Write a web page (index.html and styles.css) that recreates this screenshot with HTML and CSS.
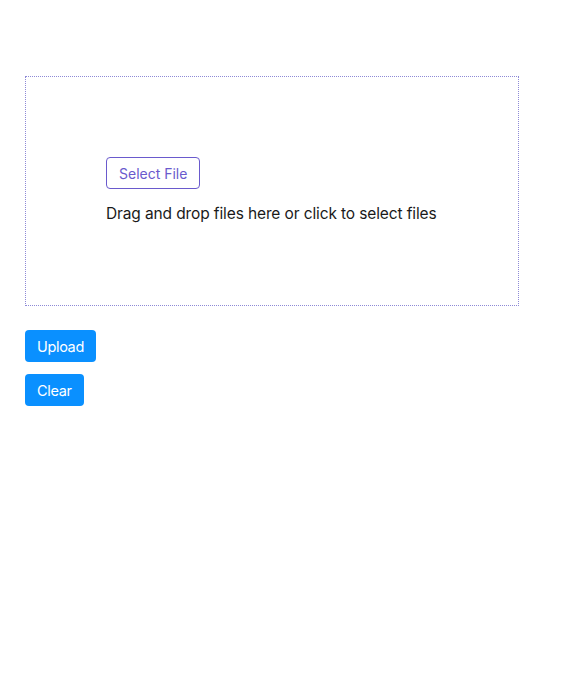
FILE: index.html
```html
<!DOCTYPE html>
<html>
<head>
<meta charset="utf-8">
<link rel="stylesheet" href="styles.css">
</head>
<body>
<div class="page">
  <div class="dropzone">
    <button class="select-btn">Select File</button>
    <p class="hint">Drag and drop files here or click to select files</p>
  </div>
  <div class="actions">
    <button class="btn">Upload</button>
    <button class="btn">Clear</button>
  </div>
</div>
</body>
</html>
```
FILE: styles.css
```css
html, body {
  margin: 0;
  background: #fff;
}
body {
  font-family: Inter, "Liberation Sans", sans-serif;
  color: #111;
}
.page {
  padding: 76px 25px 0 25px;
}
.dropzone {
  box-sizing: border-box;
  width: 494px;
  height: 230px;
  border: 1px dotted #8e8ad6;
  padding: 80px 40px 0 80px;
  display: flex;
  flex-direction: column;
  align-items: flex-start;
}
.select-btn {
  flex-shrink: 0;
  box-sizing: border-box;
  height: 32px;
  padding: 0 12px;
  border: 1px solid #6a5acd;
  border-radius: 4px;
  background: #fff;
  color: #6a5acd;
  font-family: inherit;
  font-size: 14px;
  letter-spacing: 0;
}
.hint {
  flex-shrink: 0;
  margin: 15px 0 0 0;
  font-size: 15.5px;
  line-height: 20px;
  letter-spacing: -0.12px;
  white-space: nowrap;
  color: #1a1a1a;
}
.actions {
  margin-top: 24px;
  display: flex;
  flex-direction: column;
  align-items: flex-start;
  gap: 12px;
}
.btn {
  box-sizing: border-box;
  height: 32px;
  padding: 0 12px;
  border: none;
  border-radius: 4px;
  background: #0a90ff;
  color: #fff;
  font-family: inherit;
  font-size: 14.5px;
  letter-spacing: -0.35px;
}
```
